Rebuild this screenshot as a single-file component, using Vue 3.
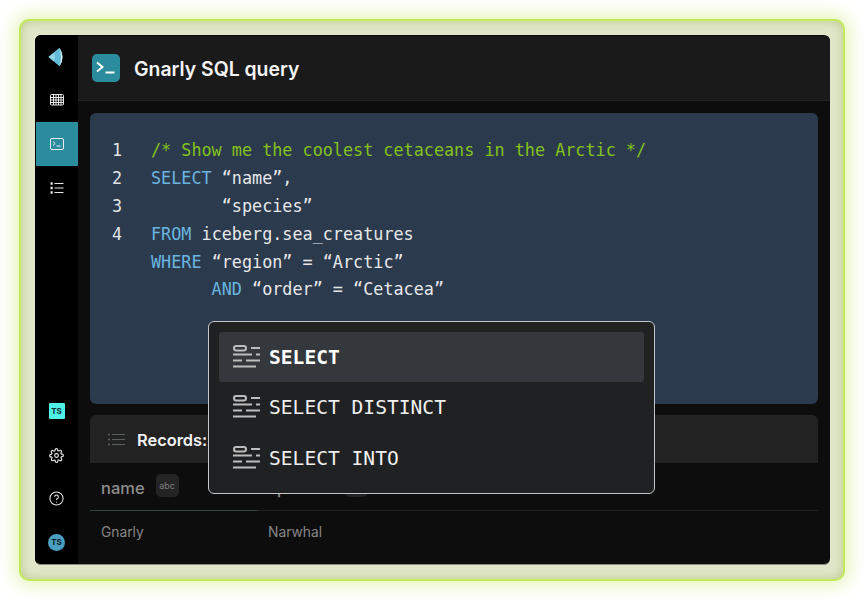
<script setup>
const code = [
  { n: '1', parts: [{ c: 'cm', t: '/* Show me the coolest cetaceans in the Arctic */' }] },
  { n: '2', parts: [{ c: 'kw', t: 'SELECT' }, { c: '', t: ' “name”,' }] },
  { n: '3', parts: [{ c: '', t: '       “species”' }] },
  { n: '4', parts: [{ c: 'kw', t: 'FROM' }, { c: '', t: ' iceberg.sea_creatures' }] },
  { n: '', parts: [{ c: 'kw', t: 'WHERE' }, { c: '', t: ' “region” = “Arctic”' }] },
  { n: '', parts: [{ c: 'kw', t: '      AND' }, { c: '', t: ' “order” = “Cetacea”' }] }
]
const options = ['SELECT', 'SELECT DISTINCT', 'SELECT INTO']
</script>

<template>
  <div class="page">
    <div class="frame">
      <div class="app">
        <aside class="side">
          <div class="side-top">
            <div class="s-item">
              <svg width="17" height="20" viewBox="0 0 17 20"><path d="M.5 10 L11.5 .8 Q17.5 10 11.5 19.2 Z" fill="#62bcd8"/><path d="M11.5 .8 Q17.5 10 11.5 19.2 Q14.5 10 11.5 .8 Z" fill="#dff2f7"/><path d="M.5 10 L6 5.4 7 10 6 14.6 Z" fill="#8fd3e6"/></svg>
            </div>
            <div class="s-item">
              <svg width="14" height="12" viewBox="0 0 14 12" fill="none" stroke="#e8e8e8" stroke-width="1"><rect x=".5" y=".5" width="13" height="10.5" rx="1"/><path d="M.5 3.5h13M.5 6h13M.5 8.5h13M3.5.5v10.5M6 .5v10.5M8.5.5v10.5M11 .5v10.5"/></svg>
            </div>
            <div class="s-item active">
              <svg width="14" height="12" viewBox="0 0 14 12" fill="none" stroke="#eef" stroke-width="1"><rect x=".5" y=".5" width="13" height="11" rx="1.5"/><path d="M3 3.5 5.2 5.5 3 7.5M6.5 8h4"/></svg>
            </div>
            <div class="s-item">
              <svg width="14" height="12" viewBox="0 0 14 12" fill="none" stroke="#e8e8e8" stroke-width="1"><path d="M4.5 1.5h9M4.5 6h9M4.5 10.5h9"/><path stroke-width="2.4" d="M.5 1.5h2.2M.5 6h2.2M.5 10.5h2.2"/></svg>
            </div>
          </div>
          <div class="side-bottom">
            <div class="s-item"><span class="ts-square">TS</span></div>
            <div class="s-item gear">
              <svg width="15" height="15" viewBox="0 0 24 24" fill="none" stroke="#e8e8e8" stroke-width="1.8" stroke-linejoin="round"><circle cx="12" cy="12" r="3"/><path d="M19.4 15a1.65 1.65 0 0 0 .33 1.82l.06.06a2 2 0 1 1-2.83 2.83l-.06-.06a1.65 1.65 0 0 0-2.82 1.17V21a2 2 0 1 1-4 0v-.09a1.65 1.65 0 0 0-2.82-1.11l-.06.06a2 2 0 1 1-2.83-2.83l.06-.06a1.65 1.65 0 0 0-1.17-2.82H3a2 2 0 1 1 0-4h.09A1.65 1.65 0 0 0 4.2 7.33l-.06-.06a2 2 0 1 1 2.83-2.83l.06.06a1.65 1.65 0 0 0 2.82-1.17V3a2 2 0 1 1 4 0v.09a1.65 1.65 0 0 0 2.82 1.11l.06-.06a2 2 0 1 1 2.83 2.83l-.06.06a1.65 1.65 0 0 0 1.17 2.82H21a2 2 0 1 1 0 4h-.09a1.65 1.65 0 0 0-1.51 1z"/></svg>
            </div>
            <div class="s-item">
              <svg width="15" height="15" viewBox="0 0 16 16" fill="none" stroke="#e8e8e8" stroke-width="1.1"><circle cx="8" cy="8" r="7"/><path d="M6 6.2a2 2 0 1 1 3 1.8c-.7.4-1 .8-1 1.6"/><path d="M8 11.4v1"/></svg>
            </div>
            <div class="s-item"><span class="ts-round">TS</span></div>
          </div>
        </aside>
        <div class="body">
          <header class="head">
            <span class="head-badge">
              <svg width="20" height="14" viewBox="0 0 20 14" fill="none" stroke="#fff" stroke-width="2"><path d="M1 1.5 6.5 6 1 10.5M9.5 11.5h9"/></svg>
            </span>
            <h1 class="title">Gnarly SQL query</h1>
          </header>
          <main class="main">
            <section class="editor">
              <div v-for="(l, i) in code" :key="i" class="line" :class="'l' + i">
                <span class="ln">{{ l.n }}</span><span class="txt"><span v-for="(p, j) in l.parts" :key="j" :class="p.c">{{ p.t }}</span></span>
              </div>
            </section>
            <section class="records">
              <svg width="17" height="13" viewBox="0 0 17 13" fill="none" stroke="#59625f" stroke-width="1"><path d="M4 1.5h13M4 6.5h13M4 11.5h13"/><path stroke-width="1.4" d="M0 1.5h2M0 6.5h2M0 11.5h2"/></svg>
              <span class="rec-label">Records:</span>
            </section>
            <div class="table-head">
              <div class="th th-first"><span class="th-name">name</span><span class="abc">abc</span></div>
              <div class="th th-second"><span class="th-name">species</span><span class="abc">abc</span></div>
            </div>
            <div class="table-row">
              <div class="td">Gnarly</div>
              <div class="td">Narwhal</div>
            </div>
            <div class="popup">
              <div v-for="(o, i) in options" :key="o" class="opt" :class="{ sel: i === 0 }">
                <svg width="28" height="23" viewBox="0 0 28 23" fill="none" stroke="#bdbdbd" stroke-width="2"><rect x="1" y="1" width="12" height="4.4" rx="2.2"/><path d="M18 3h9M0 9.5h19M23 9.5h4M0 15.5h9M13 15.5h14M0 21.5h23"/></svg>
                <span class="opt-text">{{ o }}</span>
              </div>
            </div>
          </main>
        </div>
      </div>
    </div>
  </div>
</template>

<style scoped>
.page { width: 864px; height: 600px; box-sizing: border-box; padding: 19px; background: #fff; overflow: hidden; }
.frame { width: 826px; height: 562px; box-sizing: border-box; border: 2px solid #c4ea55; border-radius: 10px; background: #e2e7cb; padding: 14px 13px 14px 14px; box-shadow: 0 0 18px 3px rgba(198, 234, 92, .5), inset 0 0 12px rgba(140, 165, 80, .45); }
.app { display: flex; height: 100%; background: #0d0d0d; border-radius: 6px; overflow: hidden; border-bottom: 1px solid #8a8a80; box-sizing: border-box; }
.side { width: 43px; flex: none; background: #000; display: flex; flex-direction: column; justify-content: space-between; padding-left: 1px; box-sizing: border-box; }
.side-top, .side-bottom { display: flex; flex-direction: column; }
.s-item { height: 44px; display: flex; align-items: center; justify-content: center; padding-right: 1px; box-sizing: border-box; }
.side-top .s-item:first-child { height: 43px; }
.side-bottom .s-item { height: 43.7px; }
.gear { padding-top: 2px; }
.active { background: #2a8c9d; }
.ts-square { width: 16px; height: 16px; background: #4ff0e8; color: #0c2a2e; font: 700 8px "Inter", sans-serif; display: flex; align-items: center; justify-content: center; border-radius: 1px; }
.ts-round { width: 17px; height: 17px; border-radius: 50%; background: #4a9fc0; color: #0c1a22; font: 700 8px "Inter", sans-serif; display: flex; align-items: center; justify-content: center; }
.body { flex: 1; display: flex; flex-direction: column; min-width: 0; }
.head { height: 65px; background: #1a1a1a; display: flex; align-items: center; gap: 14px; padding-left: 14px; flex: none; box-sizing: border-box; border-bottom: 1px solid #222; margin-top: 1px; }
.head-badge { width: 28px; height: 28px; border-radius: 5px; background: #2a8c9d; display: flex; align-items: center; justify-content: center; }
.title { margin: 2px 0 0; font: 600 19.4px "Inter", sans-serif; color: #f4f4f4; }
.main { position: relative; flex: 1; padding: 12px 12px 0; display: flex; flex-direction: column; min-height: 0; }
.editor { height: 291px; flex: none; background: #2c3a4d; border-radius: 6px; padding: 23px 0 0 22px; box-sizing: border-box; font: 400 16.8px "DejaVu Sans Mono", monospace; color: #e6e8ea; }
.line { display: flex; height: 28px; align-items: center; white-space: pre; }
.ln { width: 39px; flex: none; color: #dfe2e4; }
.l4, .l5 { height: 27px; }
.cm { color: #84c21a; }
.kw { color: #6ab6e0; }
.records { height: 48px; flex: none; margin-top: 11px; background: #222; border-radius: 6px 6px 0 0; display: flex; align-items: center; padding-left: 18px; gap: 12px; box-sizing: border-box; }
.rec-label { font: 600 16.4px "Inter", sans-serif; color: #f2f2f2; margin-top: 2px; }
.table-head { height: 48px; flex: none; display: flex; border-bottom: 1px solid #1f1f1f; box-sizing: border-box; }
.th { width: 168px; display: flex; align-items: center; padding-left: 11px; box-sizing: border-box; gap: 11px; }
.th-first { border-bottom: 1px solid #35433f; margin-bottom: -1px; }
.th-second { width: 240px; padding-left: 10px; gap: 16px; }
.th-name { font: 500 16.5px "Inter", sans-serif; color: #8d8d8d; margin-top: 2px; }
.abc { width: 23px; height: 23px; border-radius: 5px; background: #242424; color: #7f7f7f; font: 400 9px "Inter", sans-serif; display: flex; align-items: center; justify-content: center; margin-top: -3px; }
.table-row { display: flex; height: 43px; }
.td { width: 168px; padding-left: 11px; box-sizing: border-box; font: 400 13.8px "Inter", sans-serif; color: #868686; display: flex; align-items: center; margin-top: -1px; }
.td + .td { padding-left: 10px; }
.popup { position: absolute; left: 130px; top: 220px; width: 447px; height: 173px; box-sizing: border-box; background: #202123; border: 1.5px solid #c4c6c6; border-radius: 6px; padding: 10px; }
.opt { height: 50px; display: flex; align-items: center; gap: 8px; padding-left: 14px; border-radius: 3px; }
.opt:last-child { height: 52px; }
.sel { background: #34373c; }
.opt svg { flex: none; margin-top: -1px; }
.opt-text { font: 400 19.6px "DejaVu Sans Mono", monospace; color: #f0f0f0; }
.sel .opt-text { font-weight: 700; color: #fff; }
</style>

<style>
html, body { margin: 0; background: #fff; }
</style>
